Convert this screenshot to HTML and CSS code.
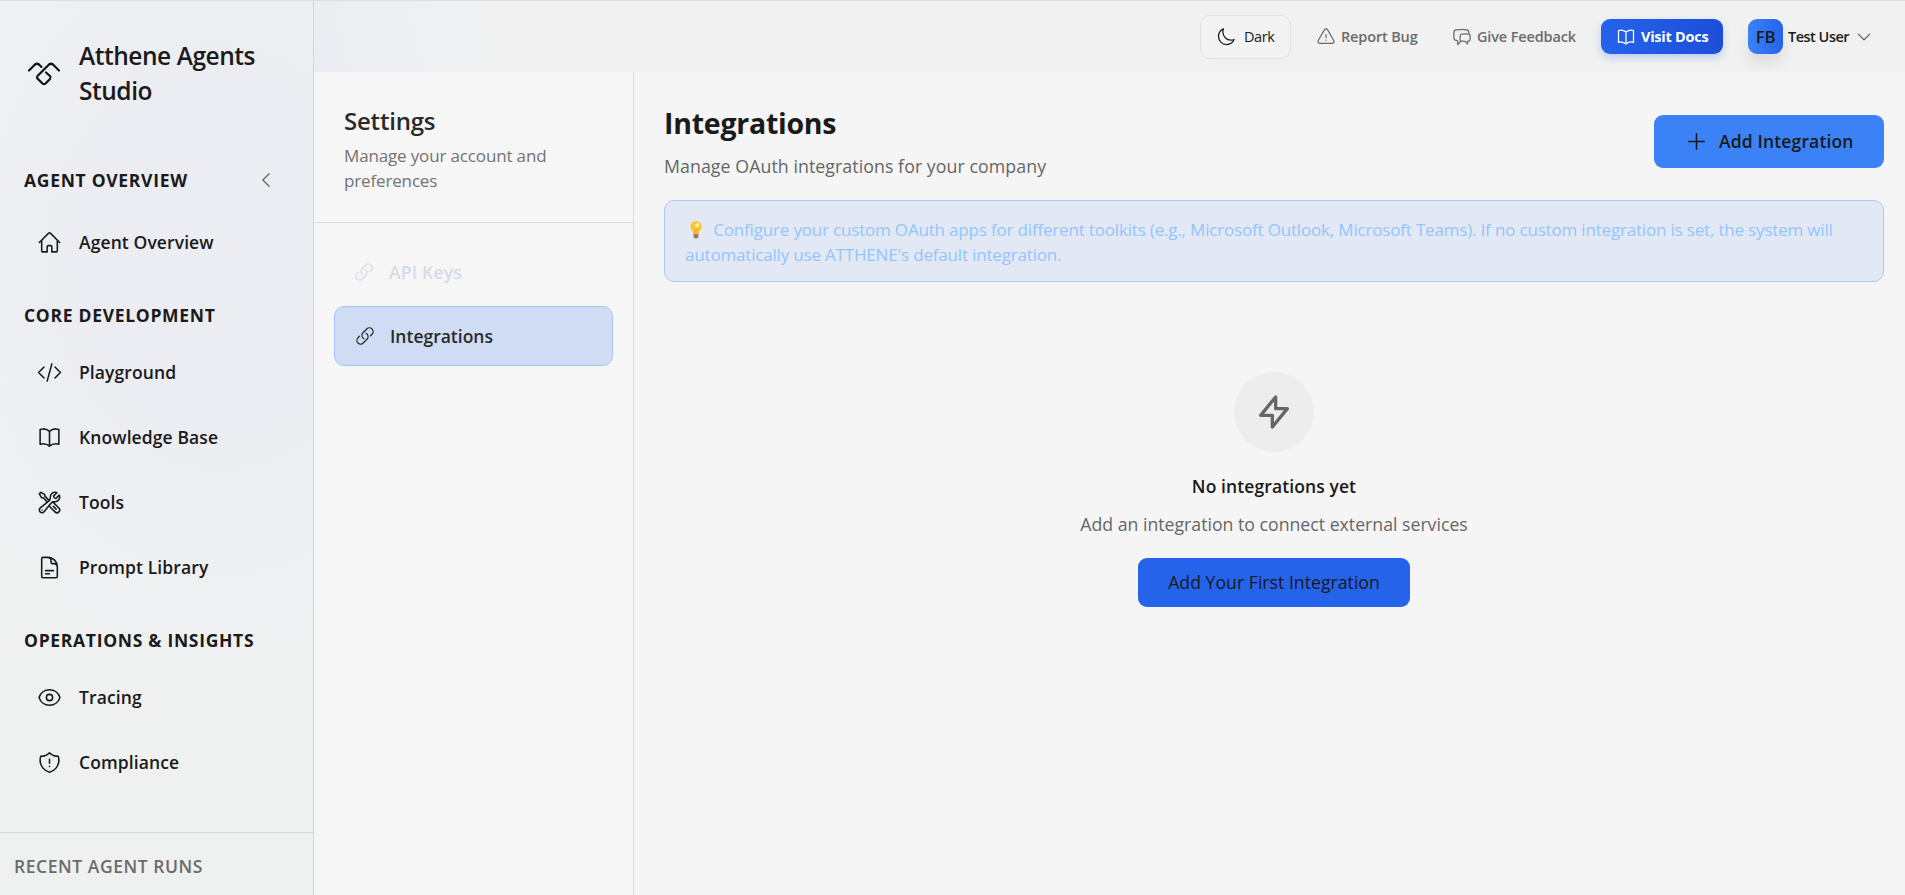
FILE: index.html
```html
<!DOCTYPE html>
<html lang="en">
<head>
    <meta charset="UTF-8">
    <meta name="viewport" content="width=device-width, initial-scale=1.0">
    <title>Atthene Agents Studio</title>
    <link rel="stylesheet" href="styles.css">
</head>
<body>
    <aside class="sidebar">
        <div class="brand">
            <svg class="brand-logo" viewBox="0 0 34 26">
                <path d="M2 9.5L8 3.5Q10 2 12 3.5L14.500 6M32 9.500L26 3.500Q24 2 22 3.500L10.500 15Q9.500 16.500 10.500 17.500L15.500 22.500Q17 23.700 18.500 22.500L23 18Q24.200 16.500 23 15L19 11.500"/>
            </svg>
            <span class="brand-name">Atthene Agents<br>Studio</span>
        </div>

        <nav class="nav">
            <div class="nav-heading first">
                <span>AGENT OVERVIEW</span>
                <svg class="collapse" viewBox="0 0 24 24"><path d="M15.750 19.500 8.250 12l7.500-7.500"/></svg>
            </div>
            <a href="#" class="nav-item">
                <svg viewBox="0 0 24 24"><path d="m2.250 12 8.954-8.955c.44-.439 1.152-.439 1.591 0L21.750 12M4.500 9.750v10.125c0 .621.504 1.125 1.125 1.125H9.750v-4.875c0-.621.504-1.125 1.125-1.125h2.250c.621 0 1.125.504 1.125 1.125V21h4.125c.621 0 1.125-.504 1.125-1.125V9.750"/></svg>
                <span>Agent Overview</span>
            </a>

            <div class="nav-heading"><span>CORE DEVELOPMENT</span></div>
            <a href="#" class="nav-item">
                <svg viewBox="0 0 24 24"><path d="M17.250 6.750 22.500 12l-5.250 5.250m-10.500 0L1.500 12l5.250-5.250m7.500-3-4.500 16.500"/></svg>
                <span>Playground</span>
            </a>
            <a href="#" class="nav-item">
                <svg viewBox="0 0 24 24"><path d="M12 6.042A8.967 8.967 0 0 0 6 3.750c-1.052 0-2.062.18-3 .512v14.250A8.987 8.987 0 0 1 6 18c2.305 0 4.408.867 6 2.292m0-14.250a8.966 8.966 0 0 1 6-2.292c1.052 0 2.062.18 3 .512v14.250A8.987 8.987 0 0 0 18 18a8.967 8.967 0 0 0-6 2.292m0-14.250v14.250"/></svg>
                <span>Knowledge Base</span>
            </a>
            <a href="#" class="nav-item">
                <svg viewBox="0 0 24 24"><path d="M11.420 15.170 17.250 21A2.652 2.652 0 0 0 21 17.250l-5.877-5.877M11.420 15.170l2.496-3.030c.317-.384.740-.626 1.208-.766M11.420 15.170l-4.655 5.653a2.548 2.548 0 1 1-3.586-3.586l6.837-5.630m5.108-.233c.550-.164 1.163-.188 1.743-.140a4.500 4.500 0 0 0 4.486-6.336l-3.276 3.277a3.004 3.004 0 0 1-2.250-2.250l3.276-3.276a4.500 4.500 0 0 0-6.336 4.486c.091 1.076-.071 2.264-.904 2.950l-.102.085m-1.745 1.437L5.909 7.500H4.500L2.250 3.750l1.500-1.500L7.500 4.500v1.409l4.260 4.260m-1.745 1.437 1.745-1.437m6.615 8.206L15.750 15.750M4.867 19.125h.008v.008h-.008v-.008Z"/></svg>
                <span>Tools</span>
            </a>
            <a href="#" class="nav-item">
                <svg viewBox="0 0 24 24"><path d="M19.500 14.250v-2.625a3.375 3.375 0 0 0-3.375-3.375h-1.500A1.125 1.125 0 0 1 13.500 7.125v-1.500a3.375 3.375 0 0 0-3.375-3.375H8.250m0 12.750h7.500m-7.500 3H12M10.500 2.250H5.625c-.621 0-1.125.504-1.125 1.125v17.250c0 .621.504 1.125 1.125 1.125h12.750c.621 0 1.125-.504 1.125-1.125V11.250a9 9 0 0 0-9-9Z"/></svg>
                <span>Prompt Library</span>
            </a>

            <div class="nav-heading"><span>OPERATIONS &amp; INSIGHTS</span></div>
            <a href="#" class="nav-item">
                <svg viewBox="0 0 24 24"><path d="M2.036 12.322a1.012 1.012 0 0 1 0-.639C3.423 7.510 7.360 4.500 12 4.500c4.638 0 8.573 3.007 9.963 7.178.070.207.070.431 0 .639C20.577 16.490 16.640 19.500 12 19.500c-4.638 0-8.573-3.007-9.963-7.178Z"/><path d="M15 12a3 3 0 1 1-6 0 3 3 0 0 1 6 0Z"/></svg>
                <span>Tracing</span>
            </a>
            <a href="#" class="nav-item">
                <svg viewBox="0 0 24 24"><path d="M12 9v3.750m0-10.036A11.959 11.959 0 0 1 3.598 6 11.990 11.990 0 0 0 3 9.750c0 5.592 3.824 10.290 9 11.622 5.176-1.332 9-6.030 9-11.622 0-1.310-.210-2.570-.598-3.750h-.152c-3.196 0-6.100-1.249-8.250-3.286Zm0 13.036h.008v.008H12v-.008Z"/></svg>
                <span>Compliance</span>
            </a>
        </nav>

        <div class="recent">RECENT AGENT RUNS</div>
    </aside>

    <div class="page">
        <header class="topbar">
            <button class="theme-btn">
                <svg viewBox="0 0 24 24"><path d="M21.752 15.002A9.720 9.720 0 0 1 18 15.750c-5.385 0-9.750-4.365-9.750-9.750 0-1.330.266-2.597.748-3.752A9.753 9.753 0 0 0 3 11.250C3 16.635 7.365 21 12.750 21a9.753 9.753 0 0 0 9.002-5.998Z"/></svg>
                <span>Dark</span>
            </button>
            <a href="#" class="top-link report">
                <svg viewBox="0 0 24 24"><path d="M12 9v3.750m-9.303 3.376c-.866 1.500.217 3.374 1.948 3.374h14.710c1.730 0 2.813-1.874 1.948-3.374L13.949 3.378c-.866-1.500-3.032-1.500-3.898 0L2.697 16.126ZM12 15.750h.007v.008H12v-.008Z"/></svg>
                <span>Report Bug</span>
            </a>
            <a href="#" class="top-link feedback">
                <svg viewBox="0 0 24 24"><path d="M20.250 8.511c.884.284 1.500 1.128 1.500 2.097v4.286c0 1.136-.847 2.100-1.980 2.193-.340.027-.680.052-1.020.072v3.091l-3-3c-1.354 0-2.694-.055-4.020-.163a2.115 2.115 0 0 1-.825-.242m9.345-8.334a2.126 2.126 0 0 0-.476-.095 48.640 48.640 0 0 0-8.048 0c-1.131.094-1.976 1.057-1.976 2.192v4.286c0 .837.460 1.580 1.155 1.951m9.345-8.334V6.637c0-1.621-1.152-3.026-2.760-3.235A48.455 48.455 0 0 0 11.250 3c-2.115 0-4.198.137-6.240.402-1.608.209-2.760 1.614-2.760 3.235v6.226c0 1.621 1.152 3.026 2.760 3.235.577.075 1.157.140 1.740.194V21l4.155-4.155"/></svg>
                <span>Give Feedback</span>
            </a>
            <a href="#" class="docs-btn">
                <svg viewBox="0 0 24 24"><path d="M12 6.042A8.967 8.967 0 0 0 6 3.750c-1.052 0-2.062.18-3 .512v14.250A8.987 8.987 0 0 1 6 18c2.305 0 4.408.867 6 2.292m0-14.250a8.966 8.966 0 0 1 6-2.292c1.052 0 2.062.18 3 .512v14.250A8.987 8.987 0 0 0 18 18a8.967 8.967 0 0 0-6 2.292m0-14.250v14.250"/></svg>
                <span>Visit Docs</span>
            </a>
            <div class="user">
                <div class="avatar">FB</div>
                <span>Test User</span>
                <svg viewBox="0 0 24 24"><path d="m19.500 8.250-7.500 7.500-7.500-7.500"/></svg>
            </div>
        </header>

        <div class="content">
            <section class="settings">
                <div class="settings-head">
                    <h2>Settings</h2>
                    <p>Manage your account and<br>preferences</p>
                </div>
                <div class="settings-nav">
                    <a href="#" class="settings-item muted">
                        <svg viewBox="0 0 24 24"><path d="M13.190 8.688a4.500 4.500 0 0 1 1.242 7.244l-4.500 4.500a4.500 4.500 0 0 1-6.364-6.364l1.757-1.757m13.350-.622 1.757-1.757a4.500 4.500 0 0 0-6.364-6.364l-4.500 4.500a4.500 4.500 0 0 0 1.242 7.244"/></svg>
                        <span>API Keys</span>
                    </a>
                    <a href="#" class="settings-item active">
                        <svg viewBox="0 0 24 24"><path d="M13.190 8.688a4.500 4.500 0 0 1 1.242 7.244l-4.500 4.500a4.500 4.500 0 0 1-6.364-6.364l1.757-1.757m13.350-.622 1.757-1.757a4.500 4.500 0 0 0-6.364-6.364l-4.500 4.500a4.500 4.500 0 0 0 1.242 7.244"/></svg>
                        <span>Integrations</span>
                    </a>
                </div>
            </section>

            <main class="main">
                <div class="main-head">
                    <div>
                        <h1>Integrations</h1>
                        <p class="subtitle">Manage OAuth integrations for your company</p>
                    </div>
                    <button class="add-btn">
                        <svg viewBox="0 0 24 24"><path d="M12 4.500v15m7.500-7.500h-15"/></svg>
                        <span>Add Integration</span>
                    </button>
                </div>

                <div class="notice">
                    <svg class="bulb" viewBox="0 0 12 18">
                        <path d="M3.500 12.500h5v4Q6 18.500 3.500 16.500Z" fill="#9b7486"/>
                        <path d="M3.500 13Q3.500 11 1.800 9.300A5.600 5.600 0 1 1 10.200 9.300Q8.500 11 8.500 13Z" fill="#fdc52f"/>
                        <circle cx="7.200" cy="4" r="2" fill="#fff0a8"/>
                        <path d="M4 8l1 1 1-1 1 1 1-1M5 9v4M7 9v4" fill="none" stroke="#f39a2b" stroke-width=".7"/>
                    </svg>
                    <span>Configure your custom OAuth apps for different toolkits (e.g., Microsoft Outlook, Microsoft Teams). If no custom integration is set, the system will</span><br>
                    <span>automatically use ATTHENE's default integration.</span>
                </div>

                <div class="empty">
                    <div class="empty-icon">
                        <svg viewBox="0 0 24 24"><path d="M13 10V3L4 14h7v7l9-11h-7z"/></svg>
                    </div>
                    <h3>No integrations yet</h3>
                    <p>Add an integration to connect external services</p>
                    <button class="first-btn">Add Your First Integration</button>
                </div>
            </main>
        </div>
    </div>
</body>
</html>
```
FILE: styles.css
```css
* {
    margin: 0;
    padding: 0;
    box-sizing: border-box;
}

body {
    font-family: 'Open Sans', 'Noto Sans', sans-serif;
    font-size: 17.5px;
    color: #1a1a1a;
    background: #f5f5f5;
    height: 100vh;
    display: flex;
    overflow: hidden;
    border-top: 1px solid #dedede;
}

a {
    color: inherit;
    text-decoration: none;
}

button {
    font: inherit;
    color: inherit;
    border: none;
    cursor: pointer;
}

svg {
    flex-shrink: 0;
    fill: none;
    stroke: currentColor;
    stroke-width: 1.5;
    stroke-linecap: round;
    stroke-linejoin: round;
}

/* Sidebar */
.sidebar {
    width: 314px;
    flex-shrink: 0;
    display: flex;
    flex-direction: column;
    border-right: 1px solid #d3d5d8;
    background: radial-gradient(ellipse 330px 420px at 70% 28%, #ecedf2 40%, rgba(236, 237, 242, 0) 100%), linear-gradient(#f0f2f2, #eff1f1);
}

.brand {
    display: flex;
    align-items: center;
    height: 145px;
    padding: 0 0 2px 27px;
}

.brand-logo {
    width: 34px;
    height: 26px;
    margin: 2px 18px 0 0;
    stroke: #111;
    stroke-width: 2.2;
}

.brand-name {
    font-size: 24.5px;
    line-height: 35px;
    font-weight: 600;
    letter-spacing: -0.45px;
}

.nav {
    flex: 1;
    padding-top: 21px;
}

.nav-heading {
    display: flex;
    align-items: center;
    justify-content: space-between;
    height: 26px;
    margin: 32px 37px 16px 24px;
    font-weight: 700;
    letter-spacing: 0.7px;
}

.nav-heading.first {
    margin-top: 0;
    margin-bottom: 21px;
}

.collapse {
    width: 20px;
    height: 20px;
    color: #666;
}

.nav-item {
    display: flex;
    align-items: center;
    height: 56px;
    margin-bottom: 9px;
    padding-left: 37px;
    font-weight: 600;
    letter-spacing: 0.1px;
}

.nav-item svg {
    width: 25px;
    height: 25px;
    margin-right: 17px;
}

.recent {
    height: 63px;
    padding: 21px 14px;
    line-height: 25px;
    font-weight: 600;
    letter-spacing: 0.55px;
    color: #6b6b6b;
    border-top: 1px solid #d3d5d8;
}

/* Top bar */
.page {
    flex: 1;
    min-width: 0;
    display: flex;
    flex-direction: column;
}

.topbar {
    display: flex;
    align-items: center;
    justify-content: flex-end;
    height: 71px;
    padding-right: 32px;
    font-size: 14.5px;
    letter-spacing: -0.15px;
    background: linear-gradient(75deg, #ecedf2, #eff0f2 8%, #f1f1f1 14%);
}

.topbar svg {
    width: 20px;
    height: 20px;
}

.theme-btn {
    display: flex;
    align-items: center;
    width: 91px;
    height: 44px;
    padding-left: 15px;
    letter-spacing: -0.4px;
    background: #f3f3f3;
    border: 1px solid #e1e1e1;
    border-radius: 10px;
}

.theme-btn svg {
    margin-right: 8px;
}

.top-link {
    display: flex;
    align-items: center;
    font-weight: 600;
    color: #6b6b6b;
}

.top-link svg {
    margin-right: 5px;
}

.report {
    width: 136px;
    margin-left: 25px;
}

.feedback {
    width: 149px;
}

.docs-btn {
    display: flex;
    align-items: center;
    width: 122px;
    height: 35px;
    padding-left: 15px;
    font-weight: 700;
    letter-spacing: -0.25px;
    color: #fff;
    background: linear-gradient(90deg, #2563eb, #1d4ed8);
    border-radius: 9px;
    box-shadow: 0 4px 8px rgba(37, 99, 235, 0.25);
}

.docs-btn svg {
    margin-right: 5px;
}

.user {
    display: flex;
    align-items: center;
    width: 125px;
    margin-left: 25px;
    font-weight: 600;
    letter-spacing: -0.5px;
}

.avatar {
    display: flex;
    align-items: center;
    justify-content: center;
    width: 35px;
    height: 35px;
    margin-right: 5px;
    font-size: 17px;
    background: linear-gradient(90deg, #3b82f6, #2563eb);
    border-radius: 9px;
    box-shadow: 0 10px 15px -2px rgba(0, 0, 0, 0.1);
}

.user svg {
    width: 18px;
    height: 18px;
    margin-left: auto;
    color: #555;
}

/* Settings column */
.content {
    flex: 1;
    display: flex;
}

.settings {
    width: 320px;
    flex-shrink: 0;
    background: #f6f6f6;
    border-right: 1px solid #dfdfdf;
}

.settings-head {
    height: 151px;
    padding: 32px 30px 0;
    border-bottom: 1px solid #dfdfdf;
}

.settings-head h2 {
    font-size: 24px;
    line-height: 34px;
    font-weight: 600;
    letter-spacing: -0.2px;
    color: #2a2a2a;
}

.settings-head p {
    margin-top: 5px;
    font-size: 17px;
    line-height: 25px;
    letter-spacing: -0.15px;
    color: #737373;
}

.settings-nav {
    padding: 19px 20px;
}

.settings-item {
    display: flex;
    align-items: center;
    height: 60px;
    margin-bottom: 4px;
    padding-left: 20px;
    font-weight: 600;
}

.settings-item svg {
    width: 20px;
    height: 20px;
    margin-right: 15px;
}

.settings-item.muted {
    letter-spacing: 0.2px;
    color: #d3dce7;
}

.settings-item.active {
    color: #2a2a2a;
    background: #d0dcf4;
    border: 1px solid #a8c4f8;
    border-radius: 10px;
}

/* Main */
.main {
    flex: 1;
    min-width: 0;
    padding: 31px 21px 0 30px;
}

.main-head {
    display: flex;
    align-items: flex-start;
    justify-content: space-between;
    height: 97px;
}

.main-head h1 {
    font-size: 28.5px;
    line-height: 40px;
    font-weight: 700;
    letter-spacing: -0.25px;
}

.subtitle {
    margin-top: 10px;
    font-size: 17.8px;
    line-height: 26px;
    letter-spacing: 0.05px;
    color: #666;
}

.add-btn {
    display: flex;
    align-items: center;
    width: 230px;
    height: 53px;
    margin-top: 12px;
    padding: 0 0 1px 30px;
    font-weight: 600;
    letter-spacing: 0.15px;
    background: #3b82f6;
    border-radius: 9px;
}

.add-btn svg {
    width: 25px;
    height: 25px;
    margin-right: 10px;
}

.notice {
    height: 82px;
    padding: 16px 20px;
    font-size: 17px;
    line-height: 25px;
    letter-spacing: -0.18px;
    white-space: nowrap;
    color: #93c5fd;
    background: #e2e8f4;
    border: 1px solid #adc8f8;
    border-radius: 10px;
}

.bulb {
    width: 12px;
    height: 18px;
    margin: 0 7px -3px 5px;
    stroke: none;
}

.empty {
    display: flex;
    flex-direction: column;
    align-items: center;
    padding-top: 90px;
}

.empty-icon {
    display: flex;
    align-items: center;
    justify-content: center;
    width: 80px;
    height: 80px;
    color: #666;
    background: #ededed;
    border-radius: 50%;
}

.empty-icon svg {
    width: 40px;
    height: 40px;
    stroke-width: 2;
}

.empty h3 {
    margin-top: 19px;
    font-size: 17.5px;
    line-height: 30px;
    font-weight: 600;
    letter-spacing: 0.1px;
}

.empty p {
    margin-top: 10px;
    font-size: 17.7px;
    line-height: 26px;
    color: #666;
}

.first-btn {
    width: 272px;
    height: 49px;
    margin-top: 21px;
    padding-bottom: 1px;
    font-size: 17.7px;
    background: #2563eb;
    border-radius: 9px;
}
```
